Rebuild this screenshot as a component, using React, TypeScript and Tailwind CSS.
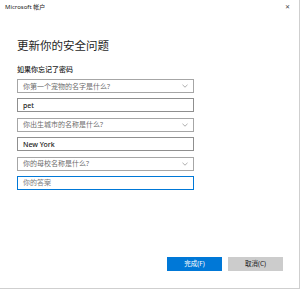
import type { ReactNode } from "react";

const cjk = { fontFamily: '"Noto Sans", "Noto Sans CJK SC", sans-serif' };

function Chevron() {
  return (
    <svg width="6" height="4" viewBox="0 0 6 4" className="shrink-0">
      <path d="M0.5 0.8 L3 3.2 L5.5 0.8" fill="none" stroke="#777" strokeWidth="0.6" />
    </svg>
  );
}

function Select({ children }: { children: ReactNode }) {
  return (
    <div className="flex h-[14px] w-[177px] items-center justify-between border border-[#a6a6a6] bg-white pl-[5px] pr-[5px] text-[7px] leading-none text-[#6d6d6d]">
      <span>{children}</span>
      <Chevron />
    </div>
  );
}

function Field({ value, active }: { value?: string; active?: boolean }) {
  return (
    <div
      className={
        "flex h-[14px] w-[177px] items-center bg-white pl-[5px] text-[7px] leading-none " +
        (active ? "border border-[#0078d7] text-[#7a7a7a]" : "border border-[#8f8f8f] font-medium text-[#1a1a1a]")
      }
    >
      {value ?? "你的答案"}
    </div>
  );
}

export default function App() {
  return (
    <div
      style={cjk}
      className="flex h-[289px] w-[300px] flex-col border-b border-r border-[#cfcfcf] bg-white"
    >
      <div className="flex h-[15px] items-center justify-between pl-[5px] pr-[9px] text-[6px] text-[#222]">
        <span>Microsoft 帐户</span>
        <span className="text-[6px] text-[#444]">✕</span>
      </div>

      <div className="flex flex-col pl-[17px]">
        <h1 className="mt-[25px] text-[11.5px] leading-[12px] font-normal text-[#1f1f1f]">
          更新你的安全问题
        </h1>
        <p className="mt-[14px] text-[7px] leading-[7px] font-medium text-[#222]">
          如果你忘记了密码
        </p>
        <div className="mt-[6px] flex flex-col gap-[5.4px]">
          <Select>你第一个宠物的名字是什么?</Select>
          <Field value="pet" />
          <Select>你出生城市的名称是什么?</Select>
          <Field value="New York" />
          <Select>你的母校名称是什么?</Select>
          <Field active />
        </div>
      </div>

      <div className="flex-1" />

      <div className="flex justify-end gap-[6px] pb-[17px] pr-[16px]">
        <button className="h-[14px] w-[55px] bg-[#0078d7] text-[6.5px] leading-none text-white">
          完成(F)
        </button>
        <button className="h-[14px] w-[55px] bg-[#cccccc] text-[6.5px] leading-none text-[#222]">
          取消(C)
        </button>
      </div>
    </div>
  );
}
